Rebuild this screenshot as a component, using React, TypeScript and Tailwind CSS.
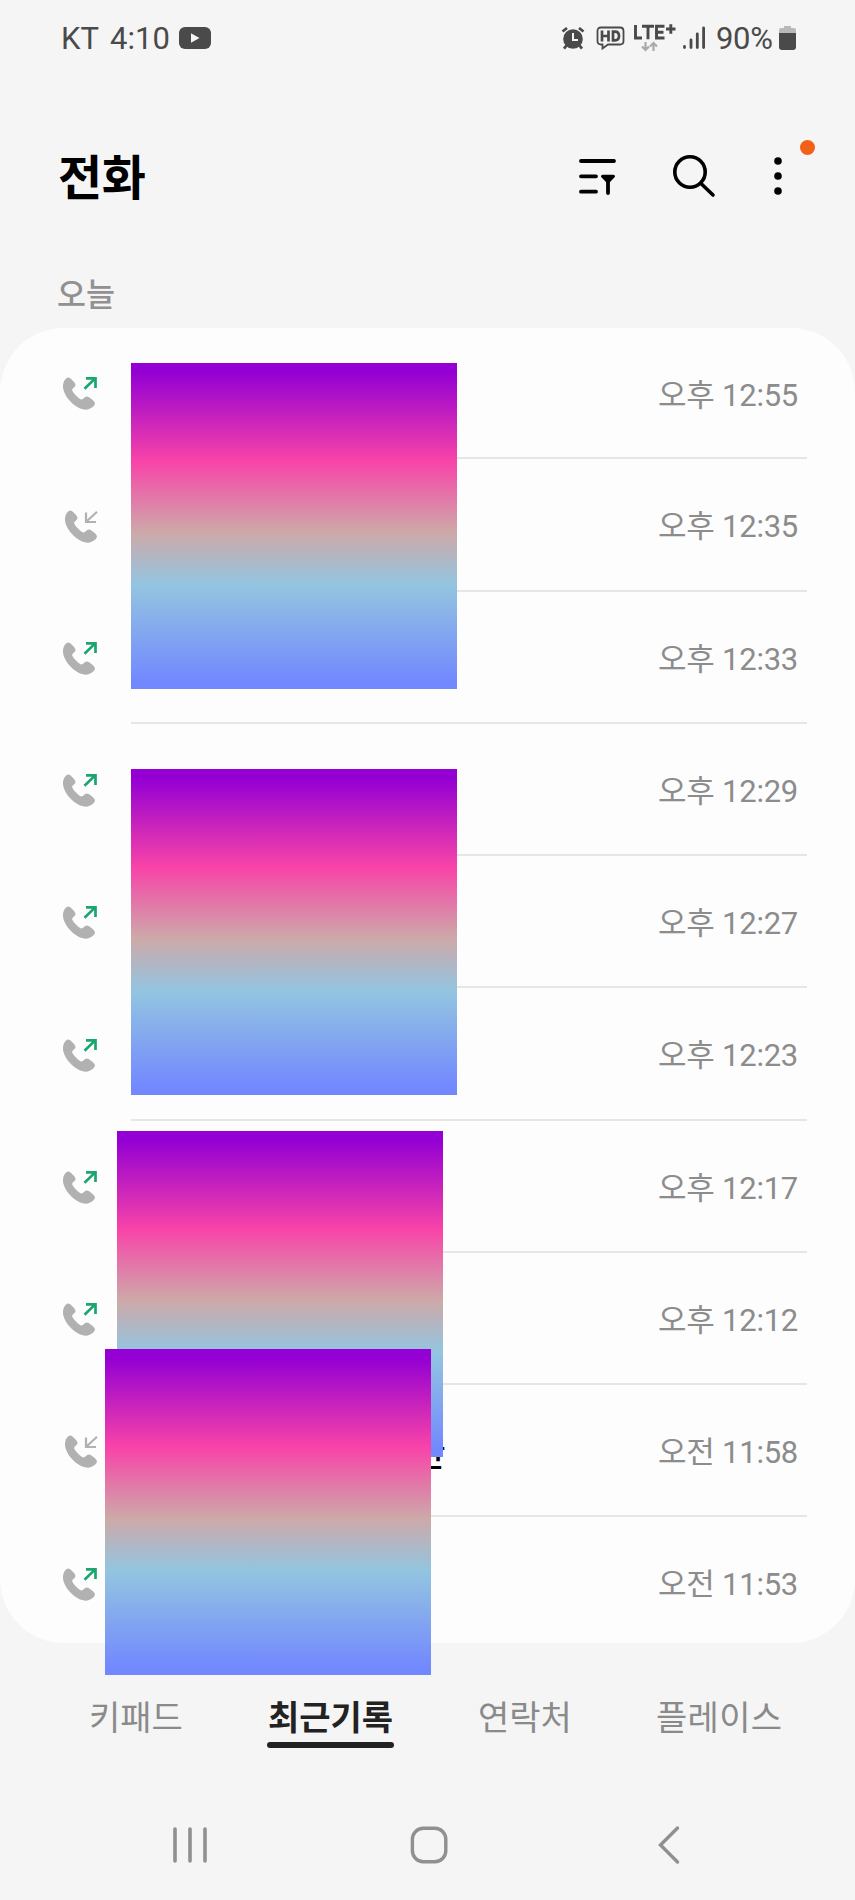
import React from 'react'
import clsx from 'clsx'

type Call = {
  time: string
  type: 'out' | 'in'
  name?: string
}

const calls: Call[] = [
  { time: '오후 12:55', type: 'out' },
  { time: '오후 12:35', type: 'in' },
  { time: '오후 12:33', type: 'out' },
  { time: '오후 12:29', type: 'out' },
  { time: '오후 12:27', type: 'out' },
  { time: '오후 12:23', type: 'out' },
  { time: '오후 12:17', type: 'out' },
  { time: '오후 12:12', type: 'out' },
  { time: '오전 11:58', type: 'in', name: '한' },
  { time: '오전 11:53', type: 'out' },
]

// stickers that hide the contact names
const covers = [
  'left-[131px] top-[363px]',
  'left-[131px] top-[769px]',
  'left-[117px] top-[1131px]',
  'left-[105px] top-[1349px]',
]

const StatusBar: React.FC = () => {
  return (
    <div className="flex h-[76px] items-center pl-[61px] pr-[59px] text-[#4a4a4a]">
      <p className="w-[118px] whitespace-nowrap text-[31px] leading-none [word-spacing:4px]">KT 4:10</p>
      <svg className="h-[22px] w-8" viewBox="0 0 32 22">
        <rect width="32" height="22" rx="6" fill="currentColor" />
        <path d="M12 6.3v9.4l8.5-4.7z" fill="#f5f5f5" />
      </svg>

      <div className="ml-auto flex items-center">
        <svg className="h-6 w-6" viewBox="0 0 24 24" fill="none" stroke="currentColor">
          <circle cx="12" cy="13" r="9.8" fill="currentColor" stroke="none" />
          <path d="M1.5 5.5 6 2M22.5 5.5 18 2M5.5 19.5 3 22.7M18.5 19.5l2.5 3.2" strokeWidth="2.8" />
          <path d="M12 7v7h5" stroke="#f5f5f5" strokeWidth="2" />
        </svg>
        <svg className="ml-[11px] h-6 w-[29px]" viewBox="0 0 29 24" fill="none" stroke="currentColor">
          <path
            d="M5 1.5h19q3.500 0 3.500 3.500v10q0 3.500-3.500 3.500H12L6.500 22.500v-4H5q-3.500 0-3.500-3.500V5q0-3.500 3.500-3.500z"
            strokeWidth="1.8"
          />
          <path d="M6 4.500v11M12.500 4.500v11M6 10h6.500M17 5.700h2q4 0 4 4.300t-4 4.300h-2z" strokeWidth="2.700" />
        </svg>
        <svg className="ml-2 h-7 w-[44px]" viewBox="0 0 44 28" fill="none" stroke="currentColor">
          <path d="M2.500 1v13H9M9 2.300h12M15 2.300V15.300M31.500 2.300H23.500v11.700h8M23.500 8.300h7M33 5h9.500M37.800 .2v9.600" strokeWidth="2.900" />
          <path d="M12.500 18v8M9 22.500l3.500 3.500 3.500-3.500M20.500 27v-8M17 22.500l3.500-3.500 3.500 3.500" stroke="#aaa" strokeWidth="2.200" />
        </svg>
        <svg className="ml-[5px] h-6 w-6" viewBox="0 0 24 24" stroke="currentColor" strokeWidth="2.800" strokeLinecap="round">
          <path d="M2.500 20.500v1M9 14v7.500M15.300 8v13.500M21.600 2v19.500" />
        </svg>
        <p className="ml-[10px] w-[60px] whitespace-nowrap text-[31px] leading-none tracking-[-0.3px]">90%</p>
        <svg className="ml-[3px] h-6 w-[17px]" viewBox="0 0 17 24">
          <path d="M5 0h7v2h3q2 0 2 2v5H0V4q0-2 2-2h3z" fill="#b9b9b9" />
          <path d="M0 7h17v14q0 3-3 3H3q-3 0-3-3z" fill="currentColor" />
        </svg>
      </div>
    </div>
  )
}

const Header: React.FC = () => {
  return (
    <header className="flex h-[200px] items-center pl-[58px] pr-[66px] text-black">
      <h1 className="pt-[5px] text-[48px] font-bold leading-none tracking-[-0.5px]">전화</h1>
      <div className="relative ml-auto flex items-center">
        <svg className="h-[42px] w-[42px]" viewBox="0 0 42 42" fill="none" stroke="currentColor" strokeWidth="3.800" strokeLinecap="round">
          <path d="M4 6h33M4 21.300h15M4 36.700h15M31 26v12" />
          <path d="M25.500 21.300h11L31 27z" fill="currentColor" strokeWidth="3" strokeLinejoin="round" />
        </svg>
        <svg className="ml-[53px] h-[44px] w-[44px]" viewBox="0 0 44 44" fill="none" stroke="currentColor" strokeWidth="3.600" strokeLinecap="round">
          <circle cx="18" cy="18" r="15.200" />
          <path d="M29.500 30 41 41" />
        </svg>
        <svg className="ml-[51px] h-[44px] w-[22px]" viewBox="0 0 22 44" fill="currentColor">
          <circle cx="11" cy="7" r="3.800" />
          <circle cx="11" cy="22" r="3.800" />
          <circle cx="11" cy="37" r="3.800" />
        </svg>
        <span className="absolute -right-[26px] -top-[14px] size-[15px] rounded-full bg-[#f26118]" />
      </div>
    </header>
  )
}

const CallIcon: React.FC<{ type: Call['type'] }> = ({ type }) => {
  return (
    <svg className={clsx('h-9 w-9', type === 'in' && 'ml-0.5')} viewBox="0 0 36 36" fill="none">
      <path
        d="M6.500 1.600C8 1.600 13.500 6.800 13.500 9C13.500 11 10 12.300 10.200 14.200C10.500 16.500 17 23 19.300 23.400C21.200 23.700 22.500 20.300 25 20.500C27 20.700 33 25.200 33 27.300C33 30 28 33.700 24 33.700C14 33.700 1 20.500 1 10.500C1 6 3.500 1.600 6.500 1.600Z"
        fill="#b1b1b1"
      />
      {type === 'out' ? (
        <path d="M22.500 12.700 33.200 2.400M24 2.400H33.500V12" stroke="#1ba571" strokeWidth="2.700" />
      ) : (
        <path d="M33 2.800 22.500 12.500M22 3.500V13H32" stroke="#b1b1b1" strokeWidth="2.200" />
      )}
    </svg>
  )
}

const CallRow: React.FC<{ call: Call; last: boolean }> = ({ call, last }) => {
  return (
    <li className="flex h-[132.25px] pl-[62px] pr-12 first:h-[131.25px]">
      <div className="flex w-[69px] items-end pb-[47px]">
        <CallIcon type={call.type} />
      </div>
      <div className={clsx('flex flex-1 items-center justify-between border-b-2 pr-[9px]', last ? 'border-transparent' : 'border-[#e6e6e6]')}>
        <p className="pl-[283px] pt-[7px] text-[34px] font-medium leading-none text-black">{call.name}</p>
        <p className="pt-[5px] text-[31px] leading-none tracking-[-0.25px] text-[#8c8c8c]">{call.time}</p>
      </div>
    </li>
  )
}

const Tabs: React.FC = () => {
  return (
    <nav className="flex h-[147px] items-start pl-[89px] pt-[56px] text-[34px] leading-[38px] text-[#8a8a8a]">
      <span className="w-[178px]">키패드</span>
      <span className="flex w-[127px] flex-col items-center gap-[5px] whitespace-nowrap font-bold text-[#222]">
        최근기록
        <i className="h-[6px] w-full rounded-full bg-[#222]" />
      </span>
      <span className="ml-[84px] w-[178px]">연락처</span>
      <span className="tracking-[0.3px]">플레이스</span>
    </nav>
  )
}

const NavBar: React.FC = () => {
  return (
    <div className="flex h-[110px] items-center pl-[170px] text-[#909090]">
      <svg className="h-10 w-10" viewBox="0 0 40 40" stroke="currentColor" strokeWidth="3.600" strokeLinecap="round">
        <path d="M5 4v32M20 4v32M35 4v32" />
      </svg>
      <svg className="ml-[199px] h-10 w-10" viewBox="0 0 40 40" fill="none" stroke="currentColor" strokeWidth="3.400">
        <rect x="3.400" y="3.300" width="33.400" height="33.400" rx="11" />
      </svg>
      <svg className="ml-[207px] h-10 w-[26px]" viewBox="0 0 26 40" fill="none" stroke="currentColor" strokeWidth="3.400" strokeLinecap="round">
        <path d="M21.500 3 4.500 20l17 17" />
      </svg>
    </div>
  )
}

const App: React.FC = () => {
  return (
    <main className="relative h-[1900px] w-[855px] overflow-hidden bg-[#f5f5f5] font-[Roboto,'Noto_Sans_CJK_KR',sans-serif]">
      <StatusBar />
      <Header />
      <h2 className="h-[52px] pl-[57px] pt-1 text-[31.5px] font-medium leading-[32px] text-[#919191]">오늘</h2>

      <ul className="h-[1315px] rounded-[64px] bg-[#fdfdfd]">
        {calls.map((call, i) => (
          <CallRow key={call.time} call={call} last={i === calls.length - 1} />
        ))}
      </ul>

      <Tabs />
      <NavBar />

      {covers.map((position) => (
        <div
          key={position}
          className={clsx(
            'absolute size-[326px] bg-[linear-gradient(#9400d3_3%,#f843a8_30%,#cda9a9_52%,#93c5e0_68%,#7288ff_98%)]',
            position
          )}
        />
      ))}
    </main>
  )
}

export default App
